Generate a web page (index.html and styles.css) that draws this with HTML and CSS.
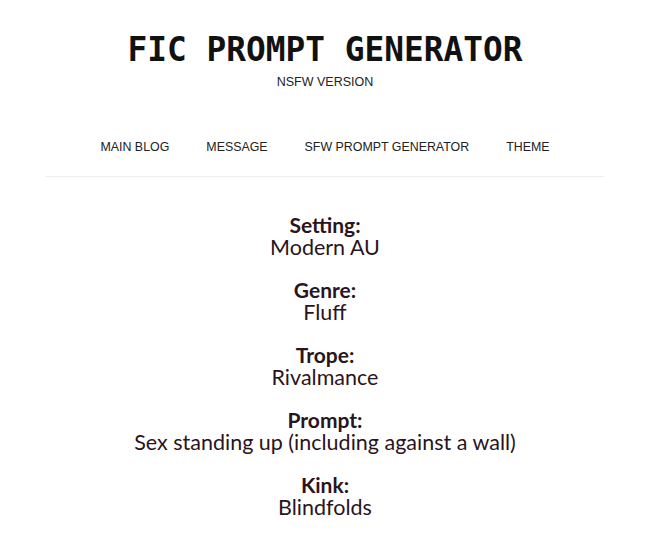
FILE: index.html
```html
<!DOCTYPE html>
<html lang="en">
<head>
    <meta charset="UTF-8">
    <meta name="viewport" content="width=device-width, initial-scale=1.0">
    <title>Fic Prompt Generator</title>
    <link rel="stylesheet" href="styles.css">
</head>
<body>
    <header class="header">
        <h1 class="title">FIC PROMPT GENERATOR</h1>
        <p class="subtitle">NSFW VERSION</p>
    </header>

    <nav class="nav">
        <ul>
            <li><a href="#">Main Blog</a></li>
            <li><a href="#">Message</a></li>
            <li><a href="#">SFW Prompt Generator</a></li>
            <li><a href="#">Theme</a></li>
        </ul>
    </nav>

    <main class="prompt">
        <div class="field">
            <h3>Setting:</h3>
            <p>Modern AU</p>
        </div>
        <div class="field">
            <h3>Genre:</h3>
            <p>Fluff</p>
        </div>
        <div class="field">
            <h3>Trope:</h3>
            <p>Rivalmance</p>
        </div>
        <div class="field">
            <h3>Prompt:</h3>
            <p>Sex standing up (including against a wall)</p>
        </div>
        <div class="field">
            <h3>Kink:</h3>
            <p>Blindfolds</p>
        </div>
    </main>
</body>
</html>
```

FILE: styles.css
```css
* {
    margin: 0;
    padding: 0;
    box-sizing: border-box;
}

body {
    background: #fff;
    font-family: "Liberation Sans", Arial, sans-serif;
    color: #222;
}

.header {
    text-align: center;
    padding-top: 31px;
}

.title {
    font-family: "DejaVu Sans Mono", monospace;
    font-size: 32.8px;
    font-weight: bold;
    line-height: 38px;
    color: #111;
}

.subtitle {
    font-size: 12.5px;
    line-height: 14px;
    margin-top: 6px;
    color: #222;
}

.nav {
    margin: 48px 46px 0;
    border-bottom: 1px solid #eee;
    padding-bottom: 21px;
}

.nav ul {
    list-style: none;
    display: flex;
    justify-content: center;
    gap: 37px;
}

.nav a {
    font-size: 12.4px;
    line-height: 16px;
    text-transform: uppercase;
    text-decoration: none;
    color: #222;
}

.prompt {
    text-align: center;
    padding-top: 37px;
    font-family: Lato, "Open Sans", sans-serif;
    color: #2a1420;
}

.field {
    margin-bottom: 21px;
}

.field h3 {
    font-size: 21px;
    line-height: 22px;
    font-weight: bold;
}

.field p {
    font-size: 21.5px;
    line-height: 22px;
}
```
